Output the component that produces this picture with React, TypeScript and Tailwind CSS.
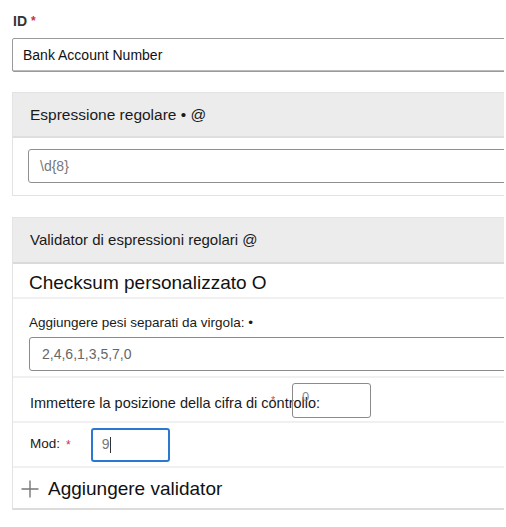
import React from 'react';

export default function App() {
  return (
    <div className="h-[527px] w-[506px] overflow-hidden bg-white font-['Liberation_Sans',Arial,sans-serif] text-[#1a1a1a]">
      <div className="ml-[12px] w-[492px] overflow-hidden">
        <div className="w-[540px]">
          {/* ID field */}
          <div className="pt-[12px]">
            <div className="flex h-[18px] items-center gap-[4px] pl-[1px] text-[14px] font-semibold text-[#333]">
              ID <span className="text-[12px] text-[#c4314b]">*</span>
            </div>
            <div className="mt-[8px] flex h-[34px] items-center rounded-[2px] border border-[#9a9a9a] pl-[10px] text-[14px] text-[#111] shadow-[inset_0_-1px_0_#bbb]">
              Bank Account Number
            </div>
          </div>

          {/* Regex section */}
          <div className="mt-[20px] border border-[#e3e3e3]">
            <div className="flex h-[45px] items-center border-b-2 border-[#dedede] bg-[#ececec] pl-[17px] text-[15.5px]">
              Espressione regolare • @
            </div>
            <div className="pb-[12px] pl-[15px] pt-[11px]">
              <div className="flex h-[34px] items-center rounded-[3px] border border-[#8f8f8f] pl-[11px] text-[14px] text-[#777]">
                \d{'{8}'}
              </div>
            </div>
          </div>

          {/* Validator section */}
          <div className="mt-[21px] border border-b-2 border-[#e3e3e3] border-b-[#dcdcdc]">
            <div className="flex h-[46px] items-center border-b-2 border-[#dadada] bg-[#ececec] pl-[17px] text-[15px]">
              Validator di espressioni regolari @
            </div>
            <div className="flex h-[35px] items-center border-b-2 border-[#f0f0f0] pl-[16px] pt-[6px] text-[19px] text-[#111]">
              Checksum personalizzato O
            </div>
            <div className="border-b-2 border-[#f0f0f0] pb-[5px] pl-[16px] pt-[15px]">
              <div className="flex h-[18px] items-center text-[13.5px]">Aggiungere pesi separati da virgola: •</div>
              <div className="mt-[5px] flex h-[34px] items-center rounded-[3px] border border-[#8a8a8a] pl-[12px] text-[14px] text-[#666]">
                2,4,6,1,3,5,7,0
              </div>
            </div>
            <div className="relative flex h-[45px] items-center border-b-2 border-[#f0f0f0] pl-[17px] pt-[8px] text-[14.5px]">
              <span>Immettere la posizione della cifra di controllo:</span>
              <span className="absolute left-[258px] top-[14px] text-[11px] text-[#d04a5c]">*</span>
              <div className="absolute left-[279px] top-[5px] flex h-[35px] w-[79px] items-start rounded-[3px] border border-[#8a8a8a] pl-[9px] pt-[3px] text-[13px] text-[#888]">
                0
              </div>
            </div>
            <div className="flex h-[45px] items-center border-b-2 border-[#f0f0f0] pl-[17px] text-[13.5px]">
              <span>Mod:</span>
              <span className="ml-[6px] text-[12px] text-[#c4314b]">*</span>
              <div className="ml-[20px] flex h-[34px] w-[79px] items-center rounded-[3px] border-2 border-[#2b78d0] pl-[9px] text-[14px] text-[#777]">
                9<span className="ml-[1px] inline-block h-[16px] w-px bg-[#333]" />
              </div>
            </div>
            <div className="flex h-[40px] items-center pl-[7px] pt-[2px] text-[19px] text-[#111]">
              <svg width="20" height="20" viewBox="0 0 20 20" className="mr-[8px]">
                <path d="M10 1.5v17M1.5 10h17" stroke="#777" strokeWidth="1.4" fill="none" />
              </svg>
              Aggiungere validator
            </div>
          </div>
        </div>
      </div>
    </div>
  );
}
